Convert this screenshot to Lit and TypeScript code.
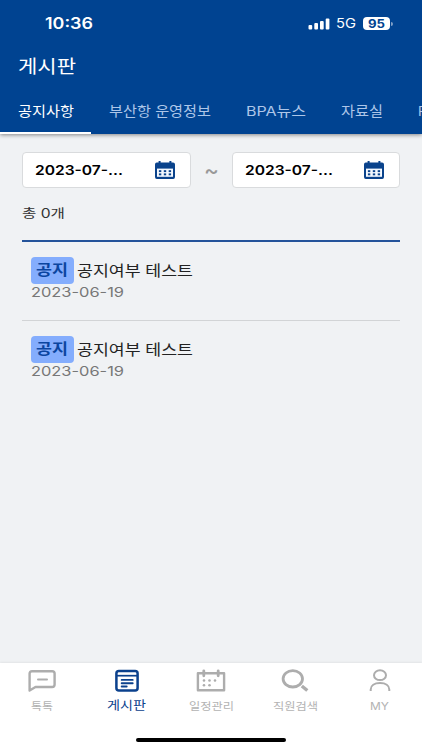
import { LitElement, html, css, svg } from "lit";
import { customElement, property } from "lit/decorators.js";

/** One line of text whose glyphs are scaled horizontally to fill a given width. */
@customElement("fit-text")
class FitText extends LitElement {
  @property() text = "";
  @property({ type: Number }) width = 0;
  static styles = css`
    :host { display: block; flex: none; white-space: nowrap; }
    .label { display: inline-block; transform-origin: 0 50%; }
  `;
  firstUpdated() {
    const label = this.renderRoot.querySelector(".label") as HTMLElement;
    const natural = label.getBoundingClientRect().width;
    this.style.width = `${this.width}px`;
    if (natural) label.style.transform = `scaleX(${this.width / natural})`;
  }
  render() {
    return html`<span class="label">${this.text}</span>`;
  }
}

const calendar = html`<svg class="cal" viewBox="0 0 20 18" width="20" height="18">
  <path fill="#0a438c" d="M3.600 0h2v1.600h8.800V0h2v1.600h1.600Q20 1.600 20 3.400v12.600Q20 18 18.200 18H1.800Q0 18 0 16V3.400Q0 1.600 1.800 1.600h1.800z"/>
  <path fill="#f4f9ff" d="M2 7.600h16v8.200H2z"/>
  <g fill="#0a438c">${[3.9, 8.8, 13.7].map((x) => [9.2, 12.4].map((y) => svg`<rect x=${x} y=${y} width="2.400" height="1.900"/>`))}</g>
</svg>`;

const icons = {
  talk: html`<svg viewBox="0 0 28 24" width="28" height="24"><g fill="none" stroke="#adadad" stroke-width="2.400" stroke-linejoin="round" stroke-linecap="round"><path d="M4 2.200H24.200Q26.600 2.200 26.600 4.600V15.600Q26.600 18 24.200 18H7.500L1.600 21.600V4.600Q1.600 2.200 4 2.200z"/><path d="M10 10.500h9" stroke-width="2"/></g></svg>`,
  board: html`<svg viewBox="0 0 28 24" width="28" height="24"><g fill="none" stroke="#0b418d"><rect x="3.400" y="2" width="21.200" height="19.500" rx="2.500" stroke-width="2.500"/><path d="M3.400 6.700h21.200" stroke-width="1.700"/><path d="M8.700 10.900h11M8.700 14.200h11M8.700 17.500h5" stroke-width="1.900" stroke-linecap="round"/></g></svg>`,
  schedule: html`<svg viewBox="0 0 30 24" width="30" height="24"><path d="M1.900 4.200h26.200v17H1.900z" fill="none" stroke="#adadad" stroke-width="2.400" stroke-linejoin="round"/><path d="M7.800 1.800v5M22.200 1.800v5" stroke="#adadad" stroke-width="2.800" stroke-linecap="round"/><g fill="#adadad">${[[8, 11.500], [13.500, 11.500], [19, 11.500], [8, 16.200], [13.500, 16.200]].map(([x, y]) => svg`<circle cx=${x} cy=${y} r="1.300"/>`)}</g></svg>`,
  search: html`<svg viewBox="0 0 28 24" width="28" height="24"><g fill="none" stroke="#adadad"><ellipse cx="11.800" cy="9.800" rx="9.700" ry="8.200" stroke-width="2.800"/><path d="M20.800 17l5.500 4.500" stroke-width="3.400"/></g></svg>`,
  person: html`<svg viewBox="0 0 28 24" width="28" height="24"><g fill="none" stroke="#adadad" stroke-width="2"><ellipse cx="14" cy="6.200" rx="6" ry="4.900"/><path d="M4.700 22v-1.500C4.700 16.600 8.400 14 14 14s9.300 2.600 9.300 6.500V22"/></g></svg>`,
};

@customElement("app-root")
class AppRoot extends LitElement {
  static styles = css`
    :host {
      display: flex; flex-direction: column; width: 422px; height: 750px; overflow: hidden;
      box-sizing: border-box; background: #f0f2f4; color: #333;
      font-family: Inter, "Noto Sans CJK KR", sans-serif;
    }
    header {
      flex: none; height: 134px; background: #004391; color: #fff; z-index: 1;
      box-shadow: 0 1px 4px rgba(0, 0, 0, 0.45); display: flex; flex-direction: column;
    }
    svg { display: block; flex: none; }
    .status { display: flex; align-items: center; height: 47px; padding: 0 29.500px 0 45px; }
    .time { font-size: 15.500px; font-weight: 600; line-height: 20px; margin-right: auto; }
    .net { font-size: 12.500px; line-height: 20px; margin: 0 7px 0 6.500px; }
    .battery {
      width: 27px; height: 13px; border-radius: 4px; background: #fff; color: #004391;
      font-size: 11.500px; font-weight: 700; line-height: 14px; display: flex; justify-content: center;
    }
    .nub { width: 1.500px; height: 4px; margin-left: 1px; border-radius: 0 2px 2px 0; background: #7f9fc6; }
    .title { font-size: 18.500px; line-height: 28px; padding: 5px 0 0 17.500px; }
    .tabs { display: flex; margin-top: auto; height: 45px; overflow: hidden; }
    .tab { flex: none; padding: 0 17.500px; height: 45px; box-sizing: border-box; font-size: 13.500px; line-height: 45px; color: #adc6e8; }
    .tab.on { color: #fff; border-bottom: 2px solid #fff; }
    main { flex: 1; padding: 18px 22px 0; }
    .dates { display: flex; align-items: center; justify-content: space-between; }
    .date {
      width: 168.500px; height: 36px; box-sizing: border-box; border: 1px solid #d9dbdd; border-radius: 4px;
      background: #fff; display: flex; align-items: center; justify-content: space-between;
      padding: 0 15px 0 12px; font-size: 13px; font-weight: 600; color: #000;
    }
    .tilde { font-size: 20px; color: #999; line-height: 20px; font-weight: 500; }
    .count { font-size: 12.500px; line-height: 20px; margin-top: 16px; }
    .list { border-top: 2px solid #24539a; margin-top: 16px; }
    .item { height: 79px; box-sizing: border-box; padding: 15px 8.500px 0; }
    .item:first-child { height: 78px; }
    .item + .item { border-top: 1px solid #d2d4d6; }
    .row { display: flex; align-items: center; gap: 3.500px; height: 27px; }
    .badge {
      width: 43px; height: 27px; box-sizing: border-box; padding: 0 5px; border-radius: 4px; background: #84adfd;
      color: #0b45a0; font-size: 14.500px; font-weight: 700; line-height: 25px;
    }
    .subject { font-size: 14.500px; line-height: 24px; color: #222; }
    .day { font-size: 13px; line-height: 17px; color: #777; }
    nav { flex: none; height: 87px; background: #fff; box-shadow: 0 -1px 2px rgba(0, 0, 0, 0.06); display: flex; flex-direction: column; }
    .items { display: flex; }
    .nav { flex: 1; display: flex; flex-direction: column; align-items: center; padding-top: 5.500px; color: #b3b3b3; font-size: 10.500px; line-height: 20px; }
    .nav fit-text { margin-top: 4px; }
    .nav.on { color: #0b418d; font-size: 12.500px; }
    .nav.on fit-text { margin-top: 3px; }
    .home { width: 150px; height: 4px; border-radius: 2px; background: #000; margin: auto auto 8px; }
  `;

  private tabs: [string, number][] = [["공지사항", 56], ["부산항 운영정보", 102], ["BPA뉴스", 60], ["자료실", 42], ["F", 8]];
  private notices = [
    { subject: "공지여부 테스트", day: "2023-06-19" },
    { subject: "공지여부 테스트", day: "2023-06-19" },
  ];
  private menu: [string, number, unknown][] = [
    ["톡톡", 22, icons.talk], ["게시판", 39, icons.board], ["일정관리", 45, icons.schedule],
    ["직원검색", 45, icons.search], ["MY", 19, icons.person],
  ];

  private date() {
    return html`<div class="date"><fit-text text="2023-07-..." width="88"></fit-text>${calendar}</div>`;
  }

  render() {
    return html`
      <header>
        <div class="status">
          <fit-text class="time" text="10:36" width="48"></fit-text>
          <svg viewBox="0 0 22 12" width="22" height="12"><g fill="#fff"><rect x=".5" y="7" width="3.700" height="4.500" rx="1"/><rect x="6.300" y="5" width="3.700" height="6.500" rx="1"/><rect x="12" y="3" width="3.700" height="8.500" rx="1"/><rect x="17.700" y=".5" width="3.700" height="11" rx="1"/></g></svg>
          <fit-text class="net" text="5G" width="20"></fit-text>
          <div class="battery"><fit-text text="95" width="17"></fit-text></div><div class="nub"></div>
        </div>
        <fit-text class="title" text="게시판" width="58"></fit-text>
        <div class="tabs">
          ${this.tabs.map(([t, w], i) => html`<div class="tab ${i === 0 ? "on" : ""}"><fit-text text=${t} width=${w}></fit-text></div>`)}
        </div>
      </header>
      <main>
        <div class="dates">${this.date()}<fit-text class="tilde" text="~" width="15"></fit-text>${this.date()}</div>
        <fit-text class="count" text="총 0개" width="43"></fit-text>
        <div class="list">
          ${this.notices.map((n) => html`<div class="item">
            <div class="row"><div class="badge"><fit-text text="공지" width="32"></fit-text></div><fit-text class="subject" text=${n.subject} width="116"></fit-text></div>
            <fit-text class="day" text=${n.day} width="93"></fit-text>
          </div>`)}
        </div>
      </main>
      <nav>
        <div class="items">
          ${this.menu.map(([t, w, icon], i) => html`<div class="nav ${i === 1 ? "on" : ""}">${icon}<fit-text text=${t} width=${w}></fit-text></div>`)}
        </div>
        <div class="home"></div>
      </nav>`;
  }
}
